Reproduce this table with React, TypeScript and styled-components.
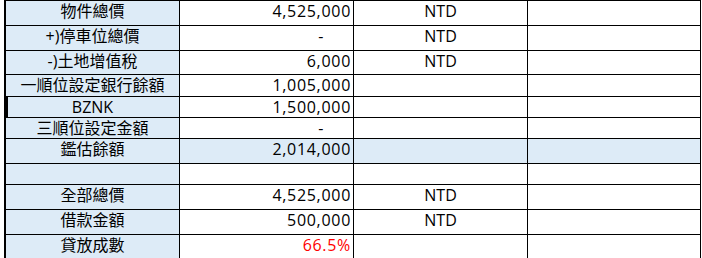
import React from "react";
import styled, { createGlobalStyle } from "styled-components";

const GlobalStyle = createGlobalStyle`
  html, body {
    margin: 0;
    padding: 0;
    background: #ffffff;
    overflow: hidden;
  }
  body {
    font-family: "Open Sans", "Noto Sans CJK TC", sans-serif;
  }
`;

const Sheet = styled.div`
  margin-left: 4px;
  width: 697px;
  box-sizing: border-box;
  padding: 1px 1px 0 2px;
  background: #000000;
  display: flex;
  flex-direction: column;
  gap: 1px;
`;

const Row = styled.div<{ $h: number }>`
  display: grid;
  grid-template-columns: 173px 173px 173px 172px;
  gap: 1px;
  height: ${(p) => p.$h}px;
`;

const Cell = styled.div<{ $blue?: boolean; $thick?: boolean }>`
  background: ${(p) => (p.$blue ? "#ddebf7" : "#ffffff")};
  box-shadow: ${(p) => (p.$thick ? "inset 2px 0 0 #000000" : "none")};
  display: flex;
  align-items: flex-start;
  font-size: 16px;
  line-height: 20px;
  color: #000000;
  white-space: nowrap;
  overflow: hidden;
`;

const LabelCell = styled(Cell)`
  justify-content: center;
`;

const NumberCell = styled(Cell)<{ $red?: boolean; $dash?: boolean }>`
  justify-content: flex-end;
  letter-spacing: 0.7px;
  padding-right: ${(p) => (p.$dash ? "29px" : "2px")};
  color: ${(p) => (p.$red ? "#ff0000" : "#000000")};
`;

const UnitCell = styled(Cell)`
  justify-content: center;
`;

type RowData = {
  label: string;
  value?: string;
  unit?: string;
  h: number;
  blue?: boolean;
  thick?: boolean;
  red?: boolean;
};

const rows: RowData[] = [
  { label: "物件總價", value: "4,525,000", unit: "NTD", h: 24 },
  { label: "+)停車位總價", value: "-", unit: "NTD", h: 24 },
  { label: "-)土地增值稅", value: "6,000", unit: "NTD", h: 23 },
  { label: "一順位設定銀行餘額", value: "1,005,000", h: 21 },
  { label: "BZNK", value: "1,500,000", h: 20, thick: true },
  { label: "三順位設定金額", value: "-", h: 20 },
  { label: "鑑估餘額", value: "2,014,000", h: 24, blue: true },
  { label: "", h: 20 },
  { label: "全部總價", value: "4,525,000", unit: "NTD", h: 24 },
  { label: "借款金額", value: "500,000", unit: "NTD", h: 24 },
  { label: "貸放成數", value: "66.5%", h: 23, red: true },
];

export default function App() {
  return (
    <>
      <GlobalStyle />
      <Sheet>
        {rows.map((r, i) => (
          <Row key={i} $h={r.h}>
            <LabelCell $blue $thick={r.thick}>
              {r.label}
            </LabelCell>
            <NumberCell $blue={r.blue} $red={r.red} $dash={r.value === "-"}>
              {r.value ?? ""}
            </NumberCell>
            <UnitCell $blue={r.blue}>{r.unit ?? ""}</UnitCell>
            <Cell $blue={r.blue} />
          </Row>
        ))}
      </Sheet>
    </>
  );
}
